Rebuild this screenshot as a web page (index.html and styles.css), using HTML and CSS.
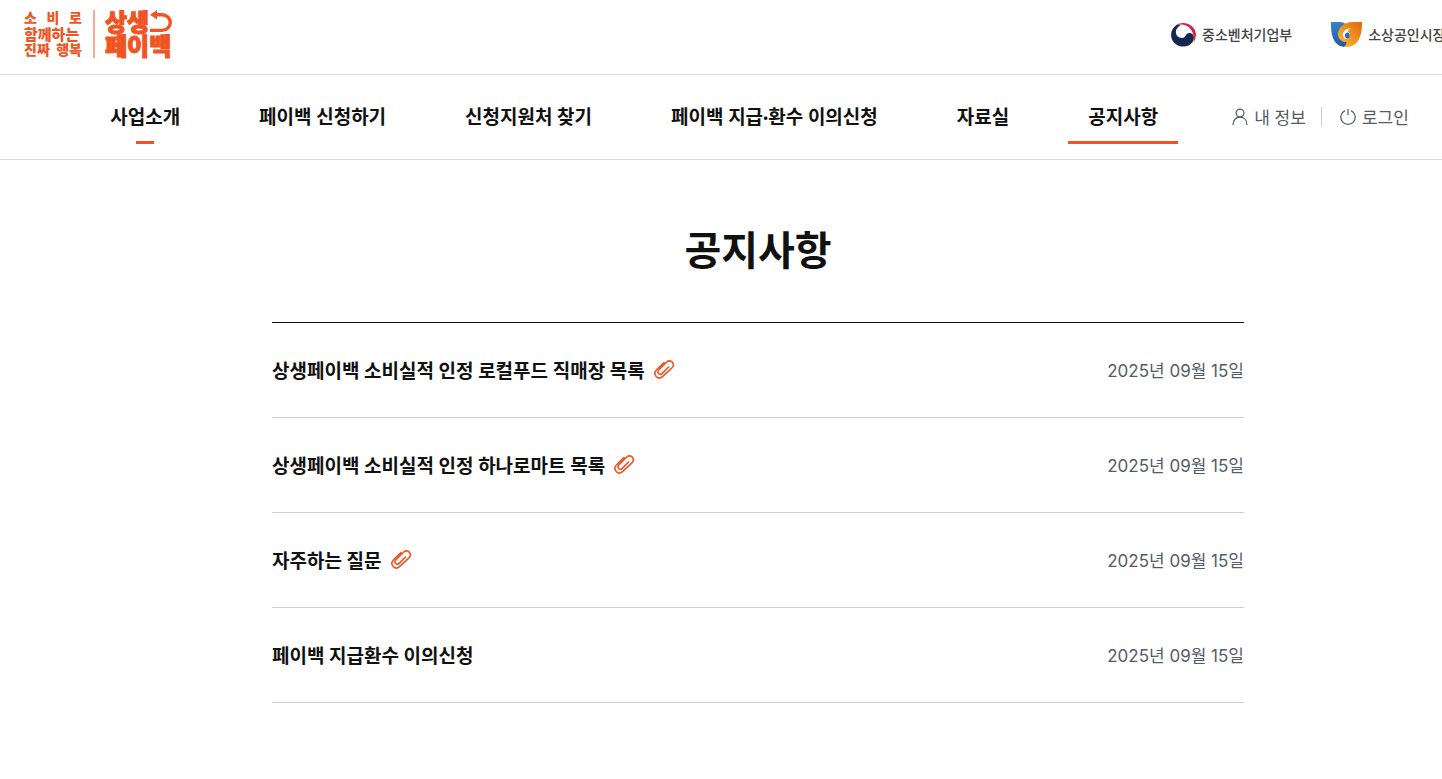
FILE: index.html
```html
<!DOCTYPE html>
<html lang="ko">
  <head>
    <meta charset="UTF-8" />
    <meta name="viewport" content="width=device-width, initial-scale=1.0" />
    <title>공지사항 | 상생페이백</title>
    <link rel="stylesheet" href="styles.css">
  </head>
  <body>
    <svg class="sprite" aria-hidden="true">
      <symbol id="clip" viewBox="0 0 22 22">
        <path d="M11 3.6 L3.4 11 C-0.8 15.4 5 21.6 9.5 17.6 L19 8.8 C22.8 5 17.6 -0.6 13.8 3 L6 10.8 C3.4 13.6 6.6 16.8 9.2 14.4 L15.6 8" fill="none" stroke="currentColor" stroke-width="1.6" stroke-linecap="round" />
      </symbol>
    </svg>

    <div class="page">
      <header>
        <!-- Logo bar -->
        <div class="top-bar">
          <a href="#" class="logo">
            <span class="slogan">
              <span class="slogan-line"><span>소</span><span>비</span><span>로</span></span>
              <span class="slogan-line wide">함께하는</span>
              <span class="slogan-line"><span>진짜</span><span>행복</span></span>
            </span>
            <span class="brand">
              <span class="brand-line">상생<svg width="24" height="24" viewBox="0 0 24 24" aria-hidden="true"><path d="M1 4.8 L8 0 V9.6 Z" fill="#f05423" /><path d="M6 4.8 H13 A8.3 7.8 0 0 1 13 20.4 H1" fill="none" stroke="#f05423" stroke-width="3.4" /></svg></span>
              <span class="brand-line">페이백</span>
            </span>
          </a>
          <div class="partners">
            <a href="#" class="partner">
              <svg width="25" height="25" viewBox="0 0 25 25" aria-hidden="true">
                <path d="M5 3.4 C13 -3 27 4 24.7 15 C24.2 17.5 23.3 19.2 22.4 20.4 C24 13 20.5 4 12.5 2.8 C9.5 2.4 7 2.6 5 3.4Z" fill="#d8213b" />
                <path d="M5.5 3 C-1.5 7.5 -1.6 17.5 4.6 22 C10 26 18 25.5 21.6 20 C24 15.5 22.6 11.4 19 11 C14.4 10.6 15.2 16 10.8 16 C6.6 16 3.8 12 5.2 8 C6.1 5.6 8 3.8 10 3 C8.4 2.6 6.8 2.6 5.5 3Z" fill="#14294f" />
              </svg>
              <span>중소벤처기업부</span>
            </a>
            <a href="#" class="partner">
              <svg width="31" height="25" viewBox="0 0 31 25" aria-hidden="true">
                <defs>
                  <linearGradient id="blue" x1="0" y1="0" x2="0" y2="1"><stop offset="0" stop-color="#3384cd" /><stop offset="1" stop-color="#2855a5" /></linearGradient>
                  <linearGradient id="orange" x1="1" y1="0" x2="0" y2="1"><stop offset="0" stop-color="#e2660c" /><stop offset="1" stop-color="#fbc02d" /></linearGradient>
                </defs>
                <path d="M0 0 H9 C12 0 14 1 15.5 3 L20 17 C20 22 17 25 13 25 C4 24 -0.5 16 0 0Z" fill="url(#blue)" />
                <path d="M31 0 H22 C12 0 6.5 7 7 13 C7.4 17 11 20.5 15.5 20 C15.5 22 14.5 24 12.5 25 H16 C26 24.5 31.3 16 31 0Z" fill="url(#orange)" />
                <path d="M20 6 C14 6.5 11.2 10.5 12 14 C13 18 18.4 18 19 13.8 C19.2 11.6 18 10.4 16.8 10 C17.4 8.3 18.6 7 20 6Z" fill="#fff" />
                <path d="M16.6 10.6 C14.2 11 13.4 13 14 14.8 C14.8 17.4 18.6 17.2 18.8 13.9 C18.9 12 17.8 10.8 16.6 10.6Z" fill="#2f69b6" />
              </svg>
              <span>소상공인시장진흥공단</span>
            </a>
          </div>
        </div>

        <!-- Main menu -->
        <div class="menu-bar">
          <nav>
            <a href="#" class="opening">사업소개</a>
            <a href="#">페이백 신청하기</a>
            <a href="#">신청지원처 찾기</a>
            <a href="#">페이백 지급·환수 이의신청</a>
            <a href="#">자료실</a>
            <a href="#" class="active">공지사항</a>
          </nav>
          <div class="user-menu">
            <a href="#">
              <svg width="16" height="18" viewBox="0 0 16 18" aria-hidden="true"><circle cx="8" cy="5" r="3.9" /><path d="M1 17 C1 12 4 9.2 8 9.2 C12 9.2 15 12 15 17" /></svg>
              <span>내 정보</span>
            </a>
            <a href="#">
              <svg width="16" height="18" viewBox="0 0 16 18" aria-hidden="true"><path d="M8 1 V7 M5 2.6 A7.2 7.2 0 1 0 11 2.6" /></svg>
              <span>로그인</span>
            </a>
          </div>
        </div>
      </header>

      <main>
        <h1>공지사항</h1>

        <ul class="notice-list">
          <li>
            <a href="#">상생페이백 소비실적 인정 로컬푸드 직매장 목록</a>
            <svg class="clip"><use href="#clip" /></svg>
            <time datetime="2025-09-15">2025년 09월 15일</time>
          </li>
          <li>
            <a href="#">상생페이백 소비실적 인정 하나로마트 목록</a>
            <svg class="clip"><use href="#clip" /></svg>
            <time datetime="2025-09-15">2025년 09월 15일</time>
          </li>
          <li>
            <a href="#">자주하는 질문</a>
            <svg class="clip"><use href="#clip" /></svg>
            <time datetime="2025-09-15">2025년 09월 15일</time>
          </li>
          <li>
            <a href="#">페이백 지급환수 이의신청</a>
            <time datetime="2025-09-15">2025년 09월 15일</time>
          </li>
        </ul>
      </main>
    </div>
  </body>
</html>
```

FILE: styles.css
```css
* {
  margin: 0;
  padding: 0;
  box-sizing: border-box;
}

body {
  background-color: #fff;
  color: #111;
  font-family: Lato, "Noto Sans CJK KR", sans-serif;
  overflow-x: hidden;
}

a {
  color: inherit;
  text-decoration: none;
  white-space: nowrap;
}

.sprite {
  display: none;
}

/* The desktop layout does not get narrower than this */
.page {
  min-width: 1516px;
}

/* Logo bar */
.top-bar {
  display: flex;
  justify-content: space-between;
  align-items: center;
  height: 75px;
  padding: 0 19px 6px 24px;
  border-bottom: 1px solid #d8d9df;
}

.logo {
  display: flex;
  align-items: center;
  color: #f05423;
  font-weight: 900;
}

.slogan {
  display: flex;
  flex-direction: column;
  width: 71px;
  margin-right: 10px;
  padding-right: 11px;
  border-right: 2px solid #f9a98e;
  font-size: 14px;
  line-height: 16px;
}

.slogan-line {
  display: flex;
  justify-content: space-between;
}

.slogan .wide {
  font-size: 15px;
}

.brand {
  font-size: 24px;
  line-height: 24px;
  -webkit-text-stroke: 1px #f05423;
}

.brand-line {
  display: flex;
}

.partners {
  display: flex;
  gap: 39px;
}

.partner {
  display: flex;
  align-items: center;
  gap: 6px;
  color: #444;
  font-size: 14px;
  font-weight: 500;
}

/* Main menu */
.menu-bar {
  display: flex;
  justify-content: center;
  align-items: center;
  gap: 54px;
  height: 85px;
  padding-right: 17px;
  border-bottom: 1px solid #d8d8d8;
}

nav {
  display: flex;
  gap: 39px;
}

nav a {
  position: relative;
  padding: 0 20px;
  font-size: 19px;
  font-weight: 700;
  line-height: 54px;
}

nav .active::after,
nav .opening::after {
  content: "";
  position: absolute;
  left: 0;
  right: 0;
  bottom: 0;
  height: 3px;
  background-color: #f05423;
}

nav .opening::after {
  left: 42%;
  right: 42%;
}

.user-menu {
  display: flex;
  align-items: center;
  color: #555b66;
  font-family: "Noto Sans CJK KR", sans-serif;
  font-size: 17px;
  line-height: 20px;
}

.user-menu a {
  display: flex;
  align-items: center;
  gap: 6px;
}

.user-menu a + a {
  margin-left: 15px;
  padding-left: 18px;
  border-left: 1px solid #cdd1d5;
}

.user-menu svg {
  fill: none;
  stroke: #555b66;
  stroke-width: 1.2;
}

/* Notice list */
main {
  width: 972px;
  margin: 0 auto;
  padding: 60px 0;
}

h1 {
  margin-bottom: 42px;
  font-size: 40px;
  font-weight: 700;
  line-height: 60px;
  text-align: center;
}

.notice-list {
  border-top: 1px solid #111;
  list-style: none;
}

.notice-list li {
  display: flex;
  align-items: center;
  height: 95px;
  padding-bottom: 1px;
  border-bottom: 1px solid #cdcfd3;
}

.notice-list a {
  font-size: 19px;
  font-weight: 700;
}

.clip {
  width: 22px;
  height: 22px;
  margin-left: 8px;
  color: #f05423;
}

.notice-list time {
  margin-left: auto;
  color: #555b66;
  font-family: Inter, "Noto Sans CJK KR", sans-serif;
  font-size: 17px;
}
```
